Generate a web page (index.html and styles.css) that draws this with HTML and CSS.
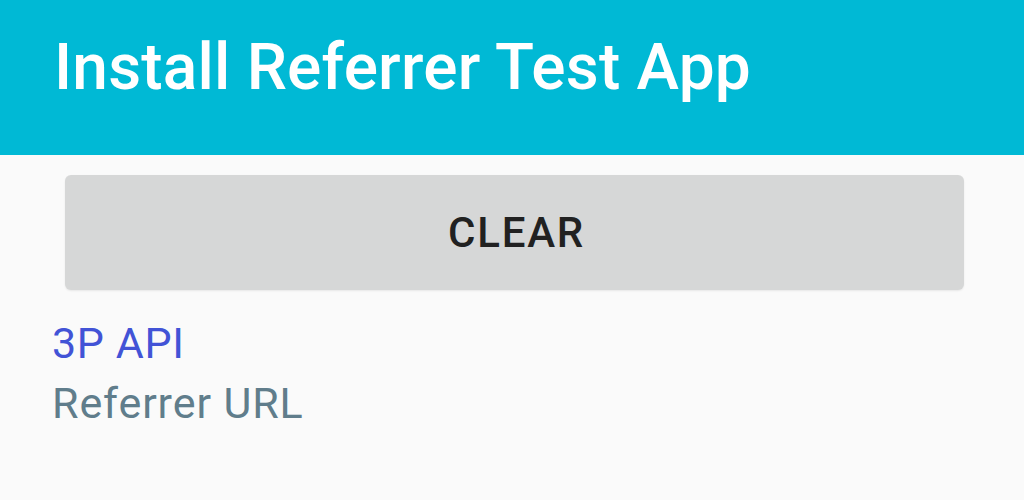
FILE: index.html
```html
<!doctype html>
<html>
  <head>
    <meta charset="UTF-8" />
    <title>Install Referrer Test App</title>
    <link rel="stylesheet" href="styles.css">
  </head>
  <body>
    <div class="toolbar">
      <h1 class="title">Install Referrer Test App</h1>
    </div>
    <div class="content">
      <button class="btn-clear">CLEAR</button>
      <div class="info">
        <div class="api">3P API</div>
        <div class="url">Referrer URL</div>
      </div>
    </div>
  </body>
</html>
```

FILE: styles.css
```css
* {
  padding: 0px;
  margin: 0px;
  box-sizing: border-box;
}
body {
  width: 1024px;
  height: 500px;
  overflow: hidden;
  background-color: #fafafa;
  font-family: Roboto, "Noto Sans", sans-serif;
}
.toolbar {
  height: 155px;
  background-color: #00b9d5;
  padding: 30px 0 0 54px;
}
.title {
  color: #fff;
  font-size: 64px;
  font-weight: 500;
  line-height: 75px;
  letter-spacing: 0.2px;
}
.content {
  display: flex;
  flex-direction: column;
  padding: 20px 0 0 52px;
}
.btn-clear {
  margin-left: 13px;
  width: 899px;
  height: 115px;
  border: none;
  border-radius: 6px;
  background-color: #d6d7d7;
  box-shadow: 0 1px 2px rgba(0, 0, 0, 0.08);
  color: #212121;
  font-family: Roboto, sans-serif;
  font-size: 42px;
  font-weight: 500;
  letter-spacing: 1.8px;
  padding-left: 4px;
}
.info {
  margin-top: 23px;
  font-size: 43px;
  line-height: 60px;
}
.api {
  color: #4253d6;
  letter-spacing: 0.6px;
}
.url {
  color: #607d8b;
  letter-spacing: 0.9px;
}
```
